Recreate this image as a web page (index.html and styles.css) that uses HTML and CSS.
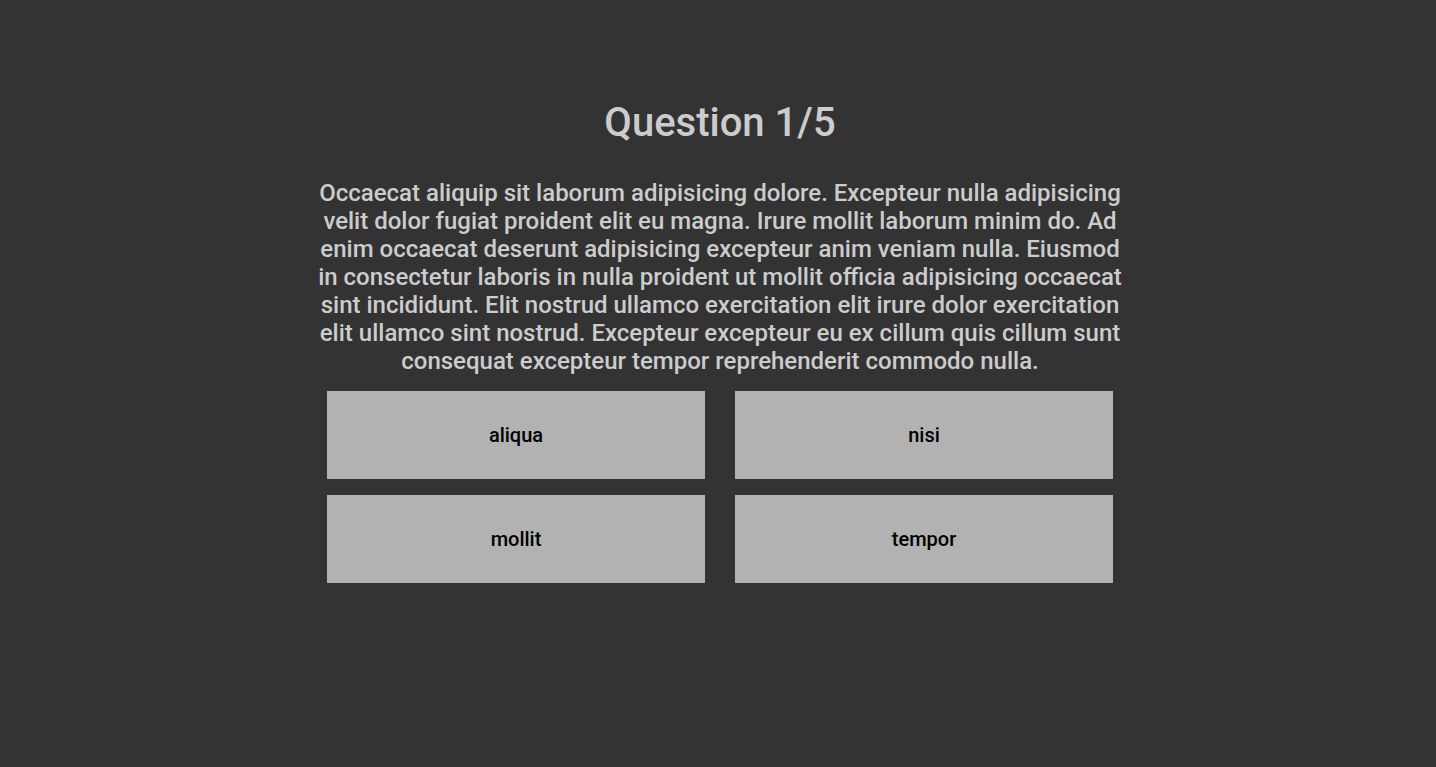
FILE: index.html
```html
<!DOCTYPE html>
<html>
<head>
<meta charset="utf-8">
<link rel="stylesheet" href="styles.css">
</head>
<body>
<main class="quiz">
  <h1 class="title">Question 1/5</h1>
  <p class="question">Occaecat aliquip sit laborum adipisicing dolore. Excepteur nulla adipisicing velit dolor fugiat proident elit eu magna. Irure mollit laborum minim do. Ad enim occaecat deserunt adipisicing excepteur anim veniam nulla. Eiusmod in consectetur laboris in nulla proident ut mollit officia adipisicing occaecat sint incididunt. Elit nostrud ullamco exercitation elit irure dolor exercitation elit ullamco sint nostrud. Excepteur excepteur eu ex cillum quis cillum sunt consequat excepteur tempor reprehenderit commodo nulla.</p>
  <div class="answers">
    <button class="answer">aliqua</button>
    <button class="answer">nisi</button>
    <button class="answer">mollit</button>
    <button class="answer">tempor</button>
  </div>
</main>
</body>
</html>
```
FILE: styles.css
```css
html, body {
  margin: 0;
  padding: 0;
  background: #333333;
  height: 100%;
}
body {
  font-family: Roboto, "Noto Sans", sans-serif;
  color: #cccccc;
  display: flex;
  justify-content: center;
  padding-left: 4px;
  box-sizing: border-box;
}
.quiz {
  width: 806px;
  padding-top: 99px;
  display: flex;
  flex-direction: column;
  align-items: center;
}
.title {
  margin: 0;
  font-size: 40px;
  font-weight: 500;
  line-height: 47px;
  color: #cccccc;
}
.question {
  margin: 33px 0 16px;
  font-size: 24px;
  font-weight: 500;
  line-height: 28px;
  text-align: center;
  color: #cccccc;
}
.answers {
  display: grid;
  grid-template-columns: 378px 378px;
  column-gap: 30px;
  row-gap: 16px;
}
.answer {
  height: 88px;
  border: none;
  background: #b2b2b2;
  color: #000000;
  font-family: Roboto, "Noto Sans", sans-serif;
  font-size: 20px;
  font-weight: 500;
  padding: 0;
}
```
